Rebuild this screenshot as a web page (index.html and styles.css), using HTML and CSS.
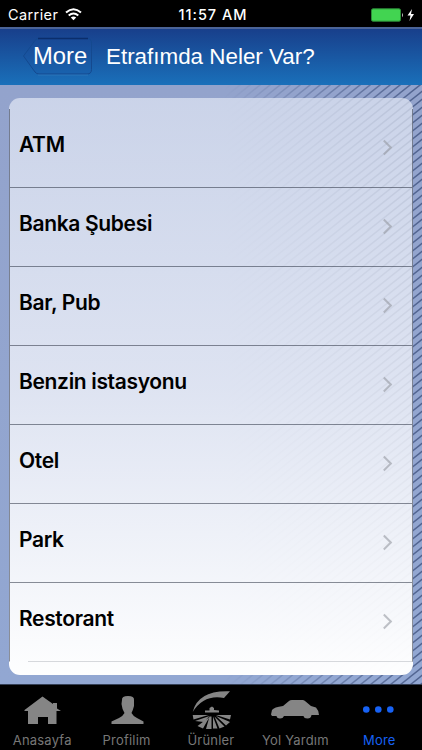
FILE: index.html
```html
<!DOCTYPE html>
<html lang="tr">
<head>
<meta charset="utf-8">
<title>Etrafımda Neler Var?</title>
<link rel="stylesheet" href="styles.css">
</head>
<body>
<div class="app">
  <header class="status">
    <div class="carrier"><span>Carrier</span>
      <svg width="17" height="13" viewBox="0 0 17 13"><g fill="none" stroke="#fff" stroke-width="2"><path d="M1 4.6Q8.5-2 16 4.6"/><path d="M3.7 7.6Q8.5 3.5 13.3 7.6"/></g><path d="M5.8 9.5Q8.5 7.3 11.2 9.5L8.5 12.3Z" fill="#fff"/></svg>
    </div>
    <div class="clock">11:57 AM</div>
    <div class="power">
      <svg width="45" height="14" viewBox="0 0 45 14"><rect x=".5" y=".8" width="29" height="12.4" rx="1.5" fill="#42d451" stroke="#2c8c38"/><path d="M31 4.7q2 2.3 0 4.6z" fill="#bbb"/><path d="M41 1L36.5 7.5h3L38.5 13 43 6h-3z" fill="#fff"/></svg>
    </div>
  </header>
  <nav class="navbar">
    <a class="back">
      <svg width="70" height="40" viewBox="0 0 70 40"><path d="M.5 20L12 4.500Q13.500 2.500 16 2.500H64Q68.500 2.500 68.500 7V33.500Q68.500 38 64 38H16Q13.500 38 12 36Z" fill="#174f9f" fill-opacity=".2" stroke="#14498f"/><path d="M15 2.500H65" stroke="#0b2e6c" stroke-width="1.500"/><path d="M15 39H65" stroke="#3c83c4" stroke-opacity=".5"/></svg>
      <span>More</span>
    </a>
    <h1>Etrafımda Neler Var?</h1>
  </nav>
  <main class="content">
    <svg class="stripes" width="422" height="599" viewBox="0 0 422 599">
      <defs>
        <pattern id="hatch" width="10" height="8" patternUnits="userSpaceOnUse"><path d="M-10 16L20-8M-10 8L10-8M0 16L20 0" stroke="#445784" stroke-width="1.400"/></pattern>
        <linearGradient id="fade" gradientUnits="userSpaceOnUse" x1="225" y1="0" x2="422" y2="0"><stop stop-color="#fff" stop-opacity="0"/><stop offset="1" stop-color="#fff" stop-opacity=".85"/></linearGradient>
        <mask id="m"><rect width="422" height="599" fill="url(#fade)"/></mask>
      </defs>
      <rect width="422" height="599" fill="url(#hatch)" mask="url(#m)"/>
    </svg>
    <ul class="list">
      <li><span>ATM</span><i></i></li>
      <li><span>Banka Şubesi</span><i></i></li>
      <li><span>Bar, Pub</span><i></i></li>
      <li><span>Benzin istasyonu</span><i></i></li>
      <li><span>Otel</span><i></i></li>
      <li><span>Park</span><i></i></li>
      <li><span>Restorant</span><i></i></li>
    </ul>
  </main>
  <footer class="tabs">
    <a><svg width="60" height="40" viewBox="0 0 60 40"><path d="M12.500 25L30.500 11.500 41 19V18h4v5.500l4 2.500h-4.500V39H36V32H26V39H16V26h-3.500z"/></svg><span>Anasayfa</span></a>
    <a><svg width="60" height="40" viewBox="0 0 60 40"><path d="M25 15Q24.500 11 31 11T37 15V21Q36 25 34.500 28Q36 31 40 33L46.500 36.500V39H14.500V36.500L22 33Q26 31 27.500 28Q25 24 24.500 19Z"/></svg><span>Profilim</span></a>
    <a><svg width="60" height="40" viewBox="0 0 60 40"><path d="M11.700 27Q17 5 49 6.300L43 13Q23 9 11.700 27ZM11.700 30H27.500L12.500 34.500ZM28.500 31L22.500 37 14 36ZM25 44L28.500 31.500H30.500V44ZM16.500 41L28.500 32 22 43.500ZM32 31.500L36.500 43.500H32ZM33.500 31.500L43.500 41.500 38.500 43.500ZM35 31L49 37 45 40.500ZM35 30H50L49 34.500ZM24 25.500H28.500V23L31 21.500 33 23V25L38 25.500V27.500H24Z"/></svg><span>Ürünler</span></a>
    <a><svg width="60" height="40" viewBox="0 0 60 40"><path d="M6 29.500L7 25Q9 22 18 21L24 16Q25 15 27 15H37.500Q39 15 40 16L46 21L51 22.500Q53.500 25 54 30H46.500Q46 33.500 42.500 33.500T38.500 31H19Q18 33.500 15 33.500T11.500 31H7Z"/></svg><span>Yol Yardım</span></a>
    <a class="active"><svg width="60" height="40" viewBox="0 0 60 40"><circle cx="16.300" cy="24.500" r="3.300"/><circle cx="28.300" cy="24.500" r="3.300"/><circle cx="40.300" cy="24.500" r="3.300"/></svg><span>More</span></a>
  </footer>
</div>
</body>
</html>
```
FILE: styles.css
```css
* { box-sizing: border-box; }
body { margin: 0; background: #000; font-family: Inter, "Liberation Sans", sans-serif; }
.app { width: 422px; height: 750px; display: flex; flex-direction: column; overflow: hidden; }
.status { height: 27px; display: grid; grid-template-columns: 1fr auto 1fr; align-items: center; padding: 2px 6px 0 8px; color: #fff; background: #000; }
.carrier { display: flex; align-items: center; gap: 7px; font-size: 14.5px; letter-spacing: .4px; }
.clock { font-size: 14.5px; font-weight: 500; letter-spacing: 1px; padding-left: 2px; }
.power { display: flex; justify-content: flex-end; }
.navbar { height: 58px; flex: none; display: flex; align-items: center; padding-left: 23px; border-top: 2px solid #4b6497; background: linear-gradient(#183f8b, #1a70ba); color: #fff; font-family: "Liberation Sans", sans-serif; }
.back { position: relative; width: 70px; height: 42px; flex: none; }
.back svg { display: block; }
.back span { position: absolute; left: 10px; top: 6px; font-size: 23.8px; line-height: 28px; }
h1 { margin: 0 0 0 13px; font-size: 22.4px; font-weight: 400; white-space: nowrap; }
.content { position: relative; height: 599px; flex: none; padding: 13px 9px 9px; background: linear-gradient(#93a3cc, #92a7d2); }
.stripes { position: absolute; left: 0; top: 0; }
.list { position: relative; list-style: none; margin: 0; padding: 11px 0 13px; height: 577px; width: 404px; border-radius: 11px; background: linear-gradient(rgba(224,230,244,.72), rgba(236,239,248,.84) 50%, rgba(255,255,255,.99)); }
.list li { height: 79px; display: flex; align-items: center; justify-content: space-between; padding: 0 22px 7px 9px; border: 1px solid rgba(44,51,68,.55); border-width: 0 1px 1px; font-size: 21px; font-weight: 600; letter-spacing: -.34px; }
.list li:last-child { border-bottom-color: transparent; background: linear-gradient(#d6d8dc, #d6d8dc) 19px 100% / 100% 1px no-repeat border-box; }
.list i { width: 11px; height: 11px; border: solid rgba(150,153,162,.6); border-width: 2px 2px 0 0; transform: rotate(45deg); margin-top: 6px; }
.tabs { height: 66px; flex: none; display: grid; grid-template-columns: repeat(5, 84.4px); border-top: 1px solid #354056; background: #000; color: #777; }
.tabs a { display: flex; flex-direction: column; align-items: center; font-size: 13px; letter-spacing: .2px; }
.tabs svg { fill: #858585; overflow: visible; }
.tabs span { margin-top: 7px; line-height: 16px; }
.tabs .active { color: #1762f5; }
.tabs .active svg { fill: #1762f5; }
.tabs .active span { margin-left: -1px; }
```
